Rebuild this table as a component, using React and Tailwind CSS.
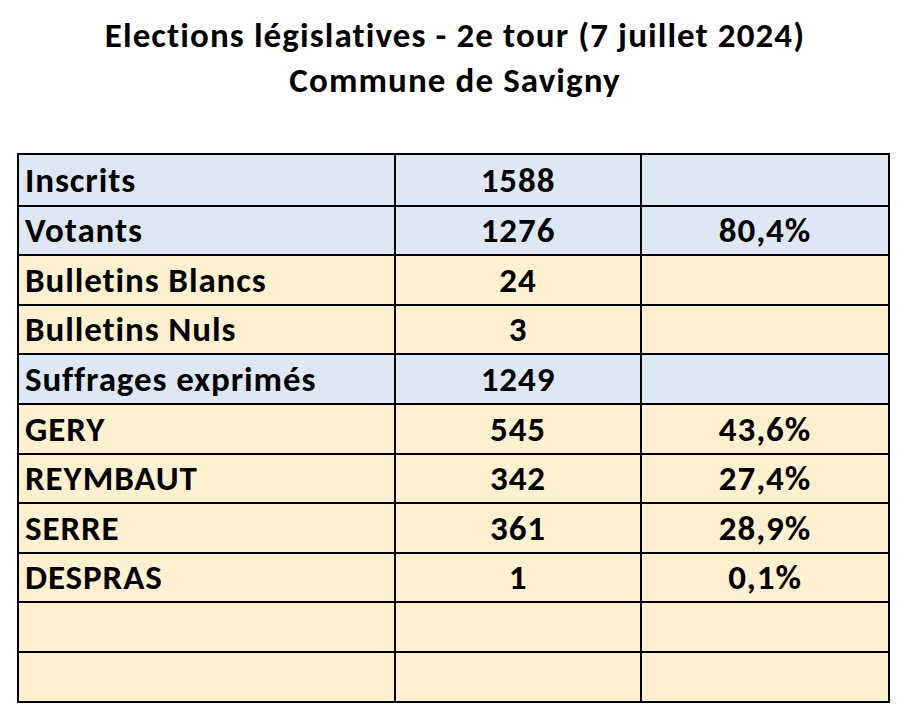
import React from 'react';

const rows = [
  { label: 'Inscrits', value: '1588', pct: '', tone: 'blue' },
  { label: 'Votants', value: '1276', pct: '80,4%', tone: 'blue' },
  { label: 'Bulletins Blancs', value: '24', pct: '', tone: 'cream' },
  { label: 'Bulletins Nuls', value: '3', pct: '', tone: 'cream' },
  { label: 'Suffrages exprimés', value: '1249', pct: '', tone: 'blue' },
  { label: 'GERY', value: '545', pct: '43,6%', tone: 'cream' },
  { label: 'REYMBAUT', value: '342', pct: '27,4%', tone: 'cream' },
  { label: 'SERRE', value: '361', pct: '28,9%', tone: 'cream' },
  { label: 'DESPRAS', value: '1', pct: '0,1%', tone: 'cream' },
  { label: '', value: '', pct: '', tone: 'cream' },
  { label: '', value: '', pct: '', tone: 'cream' },
];

export default function App() {
  return (
    <div
      className="w-[910px] h-[724px] bg-white text-black font-bold"
      style={{ fontFamily: "Carlito, Lato, 'Liberation Sans', sans-serif" }}
    >
      {/* Title */}
      <div className="pt-[13px] flex flex-col items-center">
        <h1 className="text-[35px] leading-[45px] tracking-[1.1px]">
          Elections législatives - 2e tour (7 juillet 2024)
        </h1>
        <h2 className="text-[35px] leading-[45px] tracking-[1.1px]">Commune de Savigny</h2>
      </div>

      {/* Results table */}
      <div className="ml-[17px] mt-[50px] w-[873px] border-2 border-black">
        {rows.map((r, i) => (
          <div
            key={i}
            className={
              'flex h-[49.6px] text-[35px] tracking-[0.9px] ' +
              (i > 0 ? 'border-t-2 border-black ' : '') +
              (r.tone === 'blue' ? 'bg-[#dde8f4]' : 'bg-[#fff1cf]')
            }
          >
            <div className="w-[377px] pl-[6px] flex items-center border-r-2 border-black">{r.label}</div>
            <div className="w-[246px] flex items-center justify-center border-r-2 border-black">{r.value}</div>
            <div className="flex-1 flex items-center justify-center">{r.pct}</div>
          </div>
        ))}
      </div>
    </div>
  );
}
